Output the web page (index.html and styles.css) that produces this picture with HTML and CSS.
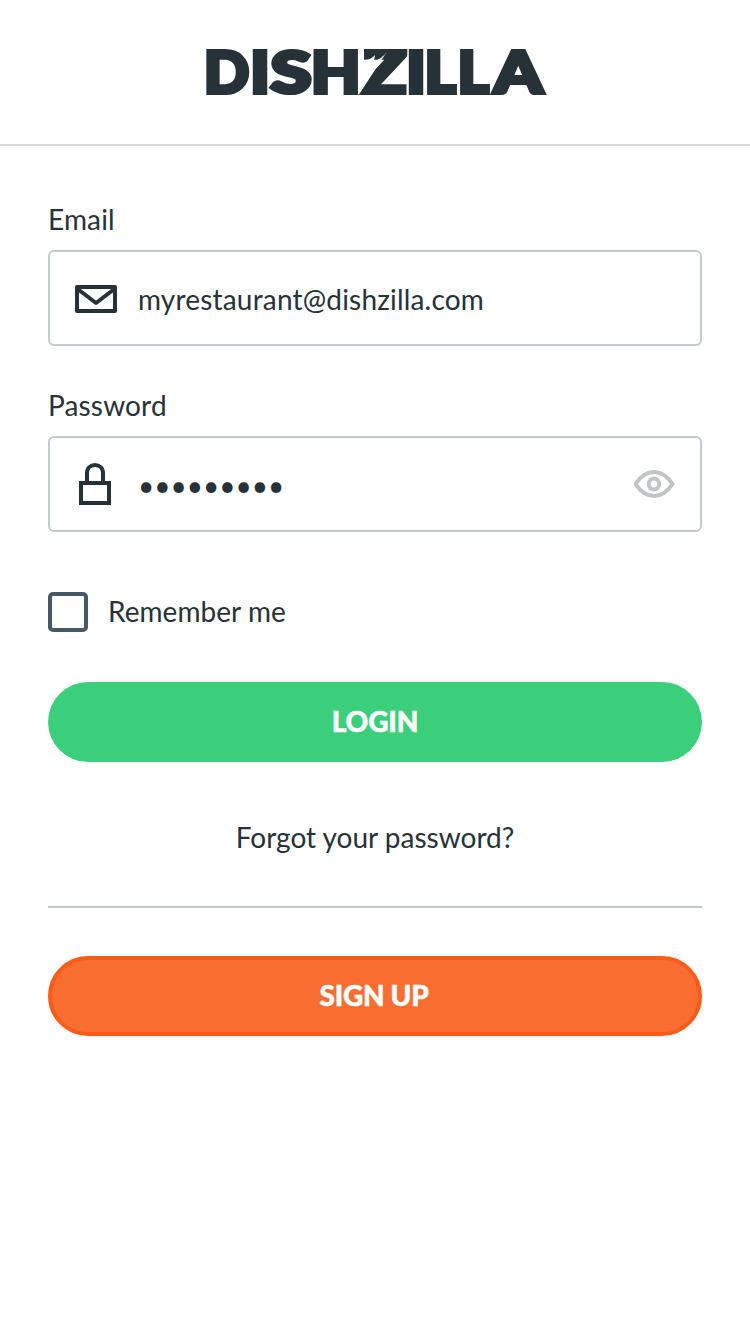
FILE: index.html
```html
<!DOCTYPE html>
<html lang="en">
<head>
<meta charset="utf-8">
<title>Dishzilla</title>
<link rel="stylesheet" href="styles.css">
</head>
<body>
<header class="header">
  <svg class="logo" width="344" height="52" viewBox="0 0 344 52" role="img" aria-label="Dishzilla">
    <g class="wordmark"><text transform="translate(0 46.6) scale(1.03 1)">D</text><text transform="translate(46.200 46.6) scale(1.12 1)">I</text><text transform="translate(66.400 46.6) scale(1.29 1)">S</text><text transform="translate(107.100 46.6) scale(1.11 1)">H</text><text transform="translate(155.600 46.6) scale(1.34 1)">Z</text><text transform="translate(202.200 46.6) scale(1.12 1)">I</text><text transform="translate(220.700 46.6) scale(1.03 1)">L</text><text transform="translate(253.700 46.6) scale(1.03 1)">L</text><text transform="translate(290 46.6) scale(1.2 1)">A</text></g>
    <path class="claw" d="M154 0H160V14Q167 14 171 9L170 15Q178 13 183 5.500L155 48.500H154z"/>
  </svg>
</header>
<main class="form">
  <label class="label">Email</label>
  <div class="field">
    <svg class="mail" width="42" height="28" viewBox="0 0 42 28"><rect x="2" y="2" width="38" height="24"/><path d="M2 3.500L21 18L40 3.500"/></svg>
    <span class="value email">myrestaurant@dishzilla.com</span>
  </div>
  <label class="label second">Password</label>
  <div class="field">
    <svg class="lock" width="42" height="42" viewBox="0 0 42 42"><path d="M6 20h28v20H6zM12 20V10c0-5 3.500-8 8-8s8 3 8 8v10"/></svg>
    <span class="value">•••••••••</span>
    <svg class="eye" width="42" height="28" viewBox="0 0 42 28"><path d="M2.500 14C13-2 29-2 39.500 14C29 30 13 30 2.500 14z"/><ellipse cx="21" cy="14" rx="5.200" ry="5.500"/></svg>
  </div>
  <div class="remember"><span class="box"></span><span class="remember-text">Remember me</span></div>
  <button class="button login">LOGIN</button>
  <a class="forgot">Forgot your password?</a>
  <button class="button signup">SIGN UP</button>
</main>
</body>
</html>
```
FILE: styles.css
```css
* { box-sizing: border-box; }
body { margin: 0; background: #fff; color: #263238; font: 28px/34px Lato, sans-serif; }
svg { display: block; flex: none; fill: none; }
.header { height: 146px; padding-top: 46px; border-bottom: 2px solid #dbdbdb; }
.logo { margin-left: 204px; overflow: visible; }
.wordmark { font: 900 57.6px Lato, sans-serif; fill: #263238; stroke: #263238; stroke-width: 4.2px; }
.claw { fill: #fff; }
.form { display: flex; flex-direction: column; padding: 56px 48px 0; }
.label { height: 48px; letter-spacing: .15px; }
.second { margin-top: 42px; }
.field { display: flex; align-items: center; height: 96px; padding: 0 25px; border: 2px solid #c5cace; border-radius: 6px; }
.value { margin-left: 21px; padding-top: 2px; }
.email { letter-spacing: .18px; }
.mail, .lock { stroke: #263238; stroke-width: 4; }
.mail { margin-top: 2px; stroke-linejoin: round; }
.eye { margin-left: auto; stroke: #c1c3c5; stroke-width: 4; stroke-linejoin: round; }
.remember { display: flex; align-items: center; gap: 20px; height: 40px; margin-top: 60px; }
.remember-text { padding-bottom: 2px; letter-spacing: .05px; }
.box { width: 40px; height: 40px; border: 4px solid #455a64; border-radius: 5px; }
.button { height: 80px; padding: 0 0 2px; border: 0; border-radius: 40px; color: #fff; font: 900 28px/34px Lato, sans-serif; letter-spacing: -.1px; -webkit-text-stroke: .5px #fff; }
.login { margin-top: 50px; background: #3bcf7c; }
.forgot { height: 146px; padding-top: 58px; border-bottom: 2px solid #c5cace; text-align: center; }
.signup { margin-top: 48px; padding-right: 2px; background: #f96e30; border: 4px solid #fb5b19; letter-spacing: -.3px; }
```
